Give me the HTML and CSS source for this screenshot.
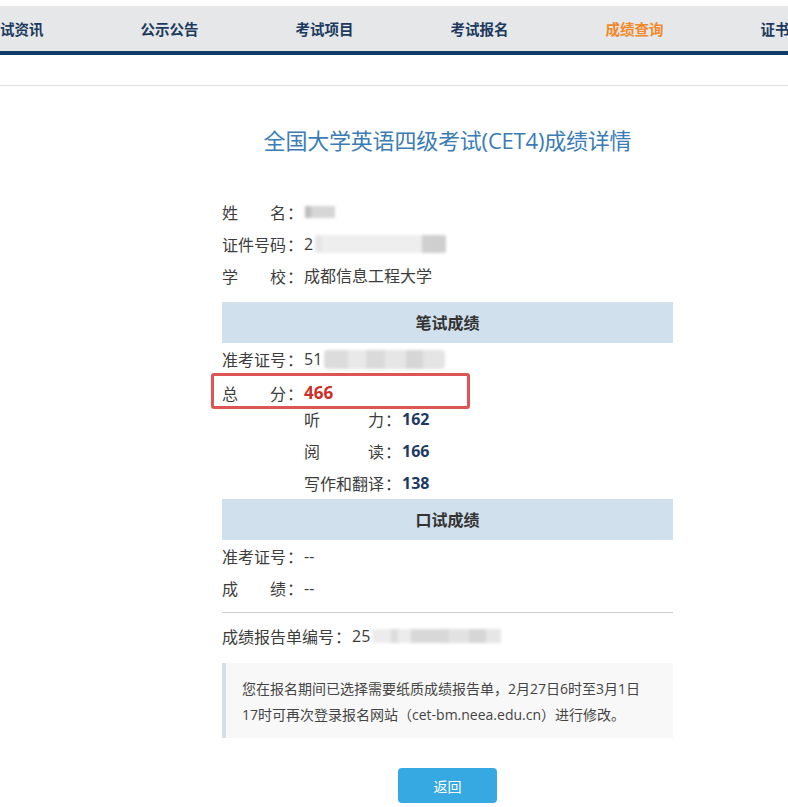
FILE: index.html
```html
<!DOCTYPE html>
<html lang="zh-CN">
<head>
<meta charset="utf-8">
<title>成绩详情</title>
<link rel="stylesheet" href="styles.css">
</head>
<body>
<div class="topgap"></div>
<nav class="nav">
  <ul class="nav-list">
    <li>考试资讯</li>
    <li>公示公告</li>
    <li>考试项目</li>
    <li>考试报名</li>
    <li class="active">成绩查询</li>
    <li>证书查询</li>
  </ul>
</nav>
<div class="subbar"></div>

<main class="content">
  <h1 class="title">全国大学英语四级考试(CET4)成绩详情</h1>

  <div class="info">
    <div class="row"><span class="lbl">姓名</span><span class="colon">：</span><span class="val"><span class="blur blur-name"></span></span></div>
    <div class="row"><span class="lbl">证件号码</span><span class="colon">：</span><span class="val">2<span class="blur blur-id"></span></span></div>
    <div class="row"><span class="lbl">学校</span><span class="colon">：</span><span class="val">成都信息工程大学</span></div>
  </div>

  <div class="section-head first">笔试成绩</div>
  <div class="row"><span class="lbl">准考证号</span><span class="colon">：</span><span class="val">51<span class="blur blur-ticket"></span></span></div>
  <div class="row total"><span class="lbl">总分</span><span class="colon">：</span><span class="val score-total">466</span><span class="mark"></span></div>
  <div class="subrows">
    <div class="row"><span class="lbl lbl5">听力</span><span class="colon">：</span><span class="val score">162</span></div>
    <div class="row"><span class="lbl lbl5">阅读</span><span class="colon">：</span><span class="val score">166</span></div>
    <div class="row"><span class="lbl lbl5">写作和翻译</span><span class="colon">：</span><span class="val score">138</span></div>
  </div>

  <div class="section-head">口试成绩</div>
  <div class="row"><span class="lbl">准考证号</span><span class="colon">：</span><span class="val">--</span></div>
  <div class="row"><span class="lbl">成绩</span><span class="colon">：</span><span class="val">--</span></div>

  <hr class="divider">

  <div class="row"><span class="lbl lbl7">成绩报告单编号</span><span class="colon">：</span><span class="val">25<span class="blur blur-report"></span></span></div>

  <div class="notice">您在报名期间已选择需要纸质成绩报告单，2月27日6时至3月1日<br>17时可再次登录报名网站（cet-bm.neea.edu.cn）进行修改。</div>

  <div class="actions"><button class="btn" type="button">返回</button></div>
</main>
</body>
</html>
```

FILE: styles.css
```css
* { box-sizing: border-box; }
html, body { margin: 0; padding: 0; background: #fff; }
body {
  font-family: "Open Sans", "Noto Sans CJK SC", sans-serif;
  color: #3d3d3d;
  overflow: hidden;
  width: 788px;
  height: 807px;
}

.topgap { height: 6px; }

.nav {
  height: 49px;
  background: #e6e7e9;
  border-bottom: 4px solid #0e3c67;
  overflow: hidden;
}
.nav-list {
  list-style: none;
  margin: 0 0 0 -63px;
  padding: 0;
  display: flex;
  white-space: nowrap;
}
.nav-list li {
  flex: 0 0 155px;
  text-align: center;
  line-height: 45px;
  font-size: 14.5px;
  font-weight: bold;
  color: #1b3a5e;
  font-family: "Noto Sans CJK SC", sans-serif;
}
.nav-list li.active { color: #f1892a; }

.subbar {
  height: 31px;
  border-bottom: 1px solid #e2e2e2;
}

.content {
  width: 451px;
  margin-left: 222px;
  font-size: 16px;
}

.title {
  margin: 33px 0 0;
  height: 43px;
  line-height: 43px;
  text-align: center;
  font-size: 22px;
  font-weight: normal;
  color: #3a7cb6;
  white-space: nowrap;
  letter-spacing: -0.2px;
}

.info { margin-top: 34px; }

.row {
  display: flex;
  align-items: center;
  height: 32px;
  line-height: 32px;
  white-space: nowrap;
}
.lbl {
  width: 64px;
  text-align: justify;
  text-align-last: justify;
  font-family: "Noto Sans CJK SC", sans-serif;
}
.lbl5 { width: 80px; }
.lbl7 { width: 112px; }
.colon {
  width: 18px;
  font-family: "Noto Sans CJK SC", sans-serif;
  text-align: center;
}
.val { display: inline-flex; align-items: center; }

.blur {
  display: inline-block;
  filter: blur(1.6px);
}
.blur-name {
  width: 30px; height: 12px; margin-left: 1px;
  background: linear-gradient(90deg, #bdbdbd 0 20%, #d6d6d6 20% 100%);
}
.blur-id {
  width: 131px; height: 18px; margin-left: 2px;
  background: linear-gradient(90deg, #e6e6e6 0 5%, #eeeeee 5% 82%, #cfcfcf 82% 100%);
  border-radius: 3px;
}
.blur-ticket {
  width: 121px; height: 19px; margin-left: 2px;
  background: linear-gradient(90deg, #dcdcdc 0 20%, #e9e9e9 20% 35%, #dadada 35% 50%, #e6e6e6 50% 68%, #d6d6d6 68% 82%, #e4e4e4 82% 100%);
  border-radius: 4px;
}
.blur-report {
  width: 129px; height: 14px; margin-left: 2px;
  background: linear-gradient(90deg, #ececec 0 15%, #dcdcdc 15% 20%, #ececec 20% 30%, #d8d8d8 30% 60%, #e2e2e2 60% 75%, #d6d6d6 75% 88%, #e6e6e6 88% 100%);
}

.section-head {
  height: 41px;
  line-height: 41px;
  background: #d0e0ed;
  text-align: center;
  font-weight: bold;
  font-size: 16px;
  color: #333;
  font-family: "Noto Sans CJK SC", sans-serif;
}
.section-head.first { margin-top: 10px; }

.total {
  position: relative;
  height: 26px;
  margin-top: 2px;
  align-items: flex-start;
}
.total .lbl, .total .colon, .total .val { line-height: 32px; }
.score-total {
  font-weight: bold;
  font-size: 17px;
  color: #cc2f27;
}
.mark {
  position: absolute;
  left: -11px;
  top: -4px;
  width: 259px;
  height: 36px;
  border: 3px solid #dd5653;
  border-radius: 3px;
}

.subrows { padding-left: 82px; }
.score { font-weight: bold; color: #1e3a63; }

.divider {
  margin: 8px 0 7px;
  border: 0;
  border-top: 1px solid #cfcfcf;
  height: 0;
}

.notice {
  margin-top: 11px;
  height: 75px;
  padding: 13px 8px 0 16px;
  background: #f8f8f8;
  border-left: 4px solid #d3dfe9;
  font-size: 14px;
  line-height: 26px;
  color: #444;
  white-space: nowrap;
  font-family: "Open Sans", "Noto Sans CJK SC", sans-serif;
}

.actions {
  display: flex;
  justify-content: center;
  margin-top: 30px;
}
.btn {
  width: 99px;
  height: 35px;
  border: 0;
  border-radius: 4px;
  background: #37a9e2;
  color: #fff;
  font-size: 14px;
  font-family: "Noto Sans CJK SC", sans-serif;
  padding: 0;
}
```
